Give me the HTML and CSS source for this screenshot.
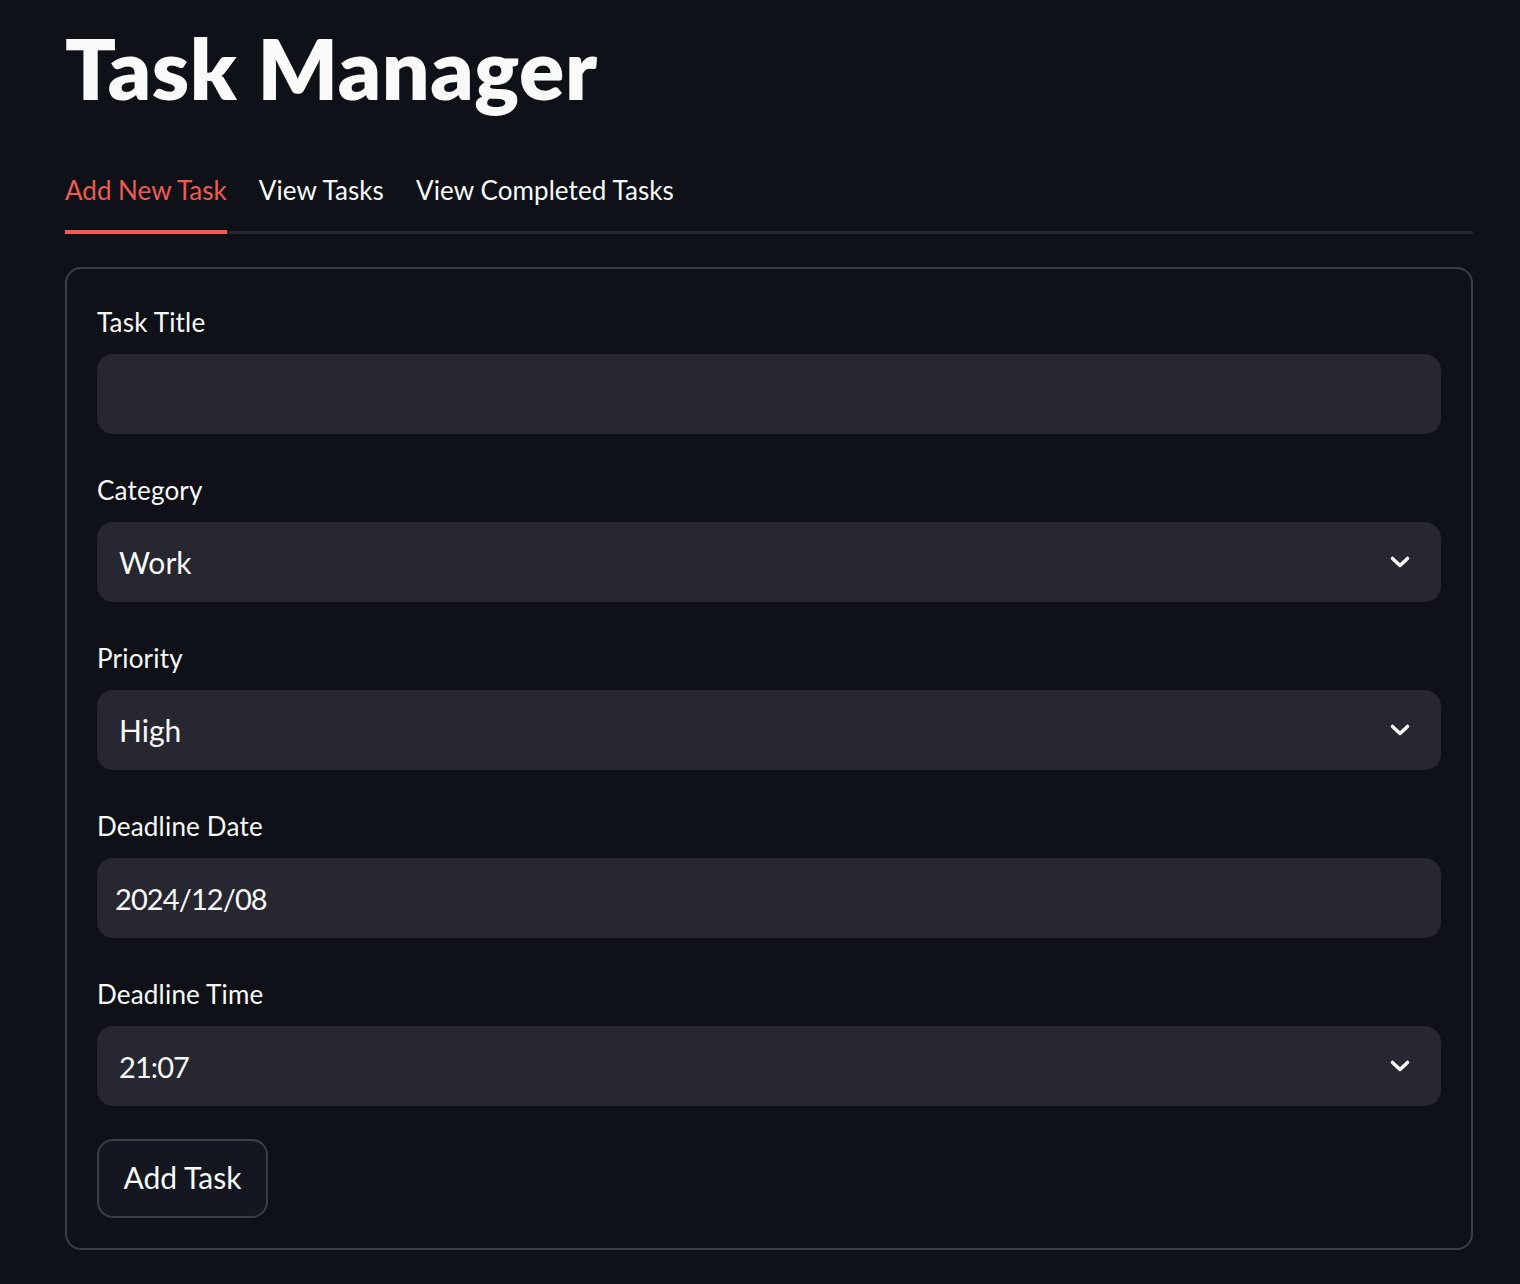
FILE: index.html
```html
<!DOCTYPE html>
<html lang="en">
<head>
<meta charset="utf-8">
<title>Task Manager</title>
<link rel="stylesheet" href="styles.css">
</head>
<body>
<main class="app">
  <h1 class="title">Task Manager</h1>
  <nav class="tabs">
    <div class="tab tab-active">Add New Task</div>
    <div class="tab">View Tasks</div>
    <div class="tab">View Completed Tasks</div>
  </nav>
  <form class="card">
    <div class="field">
      <label class="label">Task Title</label>
      <div class="input"></div>
    </div>
    <div class="field">
      <label class="label">Category</label>
      <div class="input select"><span class="value">Work</span>
        <svg class="chev" viewBox="0 0 24 24" width="24" height="24"><path d="M4.5 8.5 L12 15.5 L19.5 8.5" fill="none" stroke="#fafafa" stroke-width="3.6" stroke-linecap="round" stroke-linejoin="round"/></svg>
      </div>
    </div>
    <div class="field">
      <label class="label">Priority</label>
      <div class="input select"><span class="value">High</span>
        <svg class="chev" viewBox="0 0 24 24" width="24" height="24"><path d="M4.5 8.5 L12 15.5 L19.5 8.5" fill="none" stroke="#fafafa" stroke-width="3.6" stroke-linecap="round" stroke-linejoin="round"/></svg>
      </div>
    </div>
    <div class="field">
      <label class="label">Deadline Date</label>
      <div class="input date"><span class="value digits">2024/12/08</span></div>
    </div>
    <div class="field">
      <label class="label">Deadline Time</label>
      <div class="input select"><span class="value digits">21:07</span>
        <svg class="chev" viewBox="0 0 24 24" width="24" height="24"><path d="M4.5 8.5 L12 15.5 L19.5 8.5" fill="none" stroke="#fafafa" stroke-width="3.6" stroke-linecap="round" stroke-linejoin="round"/></svg>
      </div>
    </div>
    <div class="actions">
      <button type="button" class="btn">Add Task</button>
    </div>
  </form>
</main>
</body>
</html>
```

FILE: styles.css
```css
html, body {
  margin: 0;
  padding: 0;
  background: #0e1117;
}
body {
  font-family: "Lato", "Noto Sans", sans-serif;
  color: #fafafa;
}
.app {
  width: 1408px;
  margin-left: 65px;
  padding-top: 18px;
}
.title {
  margin: 0;
  font-size: 84px;
  font-weight: 800;
  line-height: 100px;
  letter-spacing: 0.6px;
}
.tabs {
  display: flex;
  gap: 32px;
  margin-top: 52px;
  border-bottom: 3px solid #26272f;
}
.tab {
  font-size: 26px;
  line-height: 40px;
  letter-spacing: 0.1px;
  padding-bottom: 20px;
  margin-bottom: -3px;
  border-bottom: 4px solid transparent;
  color: #fafafa;
}
.tab-active {
  color: #ef5a52;
  border-bottom-color: #ef5a52;
  letter-spacing: 0;
}
.card {
  margin-top: 33px;
  border: 2px solid #3c3e45;
  border-radius: 16px;
  padding: 31px 30px 30px;
  display: flex;
  flex-direction: column;
  gap: 34px;
}
.field {
  display: flex;
  flex-direction: column;
  gap: 10px;
}
.label {
  font-size: 26px;
  line-height: 44px;
  height: 44px;
  letter-spacing: 0.2px;
}
.input {
  height: 80px;
  background: #262730;
  border-radius: 16px;
  display: flex;
  align-items: center;
  box-sizing: border-box;
  padding: 0 29px 0 22px;
}
.date {
  padding-left: 18px;
}
.value {
  font-size: 30px;
  flex: 1;
}
.digits {
  font-size: 29px;
  letter-spacing: -0.9px;
}
.chev {
  width: 24px;
  height: 24px;
}
.actions {
  display: flex;
  margin-top: -1px;
}
.btn {
  height: 79px;
  padding: 0 24px;
  background: #141720;
  border: 2px solid #3c3e45;
  border-radius: 16px;
  color: #fafafa;
  font-family: "Lato", "Noto Sans", sans-serif;
  font-size: 30px;
  line-height: 40px;
  padding-bottom: 4px;
  min-width: 171px;
}
```
